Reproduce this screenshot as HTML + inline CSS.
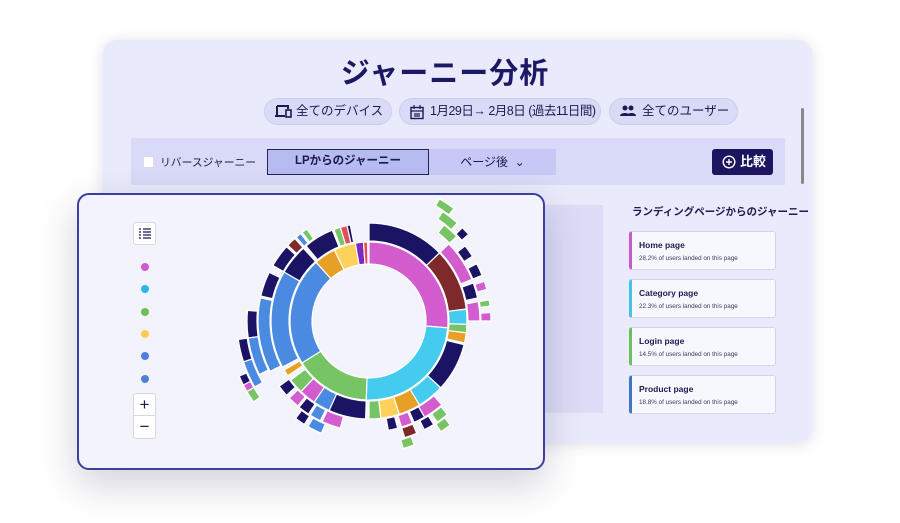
<!DOCTYPE html>
<html><head><meta charset="utf-8"><style>
*{box-sizing:border-box;margin:0;padding:0}
body{width:900px;height:523px;background:#fff;position:relative;overflow:hidden;font-family:"Liberation Sans","Noto Sans CJK JP",sans-serif;color:#1b1850}
.main{position:absolute;left:103px;top:40px;width:709px;height:402px;background:#e9eafb;border-radius:14px;box-shadow:0 2px 14px rgba(60,60,120,.18)}
.title{position:absolute;left:0;width:890px;top:50px;text-align:center;font-size:29px;font-weight:bold;color:#1c1863;letter-spacing:1px}
.pill{position:absolute;top:98px;height:27px;border-radius:14px;background:#d8daf6;border:1px solid #cbcdf0;font-size:12.5px;line-height:25px;color:#1d1a4f;padding-left:32px;white-space:nowrap;overflow:hidden}
.pill svg{position:absolute;left:10px;top:6px}
.bar{position:absolute;left:131px;top:138px;width:654px;height:47px;background:#d8daf7}
.cb{position:absolute;left:143px;top:156px;width:11px;height:12px;background:#fff;border:1px solid #ddd}
.rev{position:absolute;left:160px;top:154px;font-size:10.8px;color:#1d1a4f;white-space:nowrap}
.tab1{position:absolute;left:267px;top:149px;width:162px;height:26px;background:#b7bcf0;border:1.5px solid #23205a;font-size:11.5px;font-weight:bold;text-align:center;line-height:23px}
.tab2{position:absolute;left:429px;top:149px;width:127px;height:26px;background:#c6c9f3;font-size:12px;text-align:center;line-height:26px}
.cmp{position:absolute;left:712px;top:149px;width:61px;height:26px;background:#1c1560;border-radius:3px;color:#fff;font-size:13px;font-weight:bold;line-height:26px;padding-left:28px}
.scroll{position:absolute;left:801px;top:108px;width:3px;height:76px;background:#888;border-radius:2px}
.gpanel{position:absolute;left:545px;top:205px;width:58px;height:208px;background:#dcdcf6}
.rt{position:absolute;left:632px;top:204px;font-size:10.5px;font-weight:bold;color:#1d1a4f;white-space:nowrap}
.card{position:absolute;left:629px;width:147px;height:39px;background:#f7f7fe;border:1px solid #d3d3ec;border-radius:3px;border-left:3px solid}
.card b{position:absolute;left:7px;top:8px;font-size:8.5px;color:#1d1a4f}
.card span{position:absolute;left:7px;top:23px;font-size:6.3px;color:#3b3860;white-space:nowrap}
.float{position:absolute;left:77px;top:193px;width:468px;height:277px;background:#f3f3fc;border:2px solid #3c3ea0;border-radius:12px;box-shadow:0 14px 40px rgba(40,40,80,.22)}
.btn{position:absolute;left:133px;width:23px;background:#fff;border:1px solid #d6d6e8;border-radius:3px}
.dot{position:absolute;left:141px;width:8px;height:8px;border-radius:50%}
</style></head><body>
<div class="main"></div>
<div class="title">ジャーニー分析</div>
<div class="pill" style="left:264px;width:128px;padding-left:31px"><svg width="18" height="14" viewBox="0 0 18 14"><path d="M2 1h11v3M2 1v9M0 11h10" stroke="#1d1a4f" stroke-width="2" fill="none"/><rect x="11" y="5" width="5" height="7" fill="none" stroke="#1d1a4f" stroke-width="1.6"/></svg>全てのデバイス</div>
<div class="pill" style="left:399px;width:202px;padding-left:30px;letter-spacing:-0.5px"><svg width="14" height="15" viewBox="0 0 14 15"><rect x="1" y="2.5" width="12" height="11" fill="none" stroke="#1d1a4f" stroke-width="1.4"/><path d="M1 6h12M4 0v4M10 0v4M4 9h6M4 11h6" stroke="#1d1a4f" stroke-width="1.2"/></svg>1月29日→ 2月8日 (過去11日間)</div>
<div class="pill" style="left:609px;width:129px"><svg width="16" height="12" viewBox="0 0 16 12"><circle cx="5" cy="3" r="2.5" fill="#1d1a4f"/><circle cx="11" cy="3" r="2.5" fill="#1d1a4f"/><path d="M0 11c0-4 10-4 10 0zM7 11c0-4 9-4 9 0z" fill="#1d1a4f"/></svg>全てのユーザー</div>
<div class="bar"></div><div class="cb"></div><div class="rev">リバースジャーニー</div>
<div class="tab1">LPからのジャーニー</div>
<div class="tab2">ページ後 &nbsp;⌄</div>
<div class="cmp"><svg style="position:absolute;left:10px;top:6px" width="14" height="14" viewBox="0 0 14 14"><circle cx="7" cy="7" r="5.8" fill="none" stroke="#fff" stroke-width="1.4"/><path d="M4 7h6M7 4v6" stroke="#fff" stroke-width="1.4"/></svg>比較</div>
<div class="scroll"></div>
<div class="gpanel"></div>
<div class="rt">ランディングページからのジャーニー</div>
<div class="card" style="top:231px;border-left-color:#c55cc8"><b>Home page</b><span>28.2% of users landed on this page</span></div>
<div class="card" style="top:279px;border-left-color:#45c3e6"><b>Category page</b><span>22.3% of users landed on this page</span></div>
<div class="card" style="top:327px;border-left-color:#6dbf5e"><b>Login page</b><span>14.5% of users landed on this page</span></div>
<div class="card" style="top:375px;border-left-color:#3f76c8"><b>Product page</b><span>18.8% of users landed on this page</span></div>
<div class="float"></div>
<div class="btn" style="top:222px;height:23px"><svg style="position:absolute;left:5px;top:5px" width="12" height="11" viewBox="0 0 12 11"><path d="M0 1h2M4 1h8M0 4h2M4 4h8M0 7h2M4 7h8M0 10h2M4 10h8" stroke="#1d1a4f" stroke-width="1.3"/></svg></div>
<div class="dot" style="top:263px;background:#cf5bce"></div>
<div class="dot" style="top:285px;background:#2fb3ee"></div>
<div class="dot" style="top:308px;background:#6fbd5f"></div>
<div class="dot" style="top:330px;background:#fccb55"></div>
<div class="dot" style="top:352px;background:#4f80d8"></div>
<div class="dot" style="top:375px;background:#4f80d8"></div>
<div class="btn" style="top:393px;height:46px"><div style="position:absolute;top:0;left:0;width:21px;height:22px;border-bottom:1px solid #d6d6e8;text-align:center;font-size:17px;line-height:21px">+</div><div style="position:absolute;top:22px;left:0;width:21px;text-align:center;font-size:17px;line-height:22px">−</div></div>
<svg id="sb" style="position:absolute;left:0;top:0" width="900" height="523"></svg>
<script>
var cx=369,cy=321;
var R=[[57,79],[80,98],[99,111],[112,122],[123,132],[133,141]];
var C={p:"#d35ccf",c:"#45cbee",g:"#77c464",b:"#4a8ae0",o:"#e89f25",y:"#fdd15a",n:"#1b1464",m:"#7f2a2a",u:"#7b2bbf",r:"#e44d5a"};
var S=[
[0,0,95,'p'],[0,95,182,'c'],[0,182,238,'g'],[0,238,318,'b'],[0,318,334,'o'],[0,334,350,'y'],[0,350,356,'u'],[0,356,359,'r'],
[1,0,46,'n'],[1,46,83,'m'],[1,83,92,'c'],[1,92,97,'g'],[1,97,103,'o'],[1,104,133,'n'],[1,133,149,'c'],[1,149,162,'o'],[1,162,173,'y'],[1,173,180,'g'],[1,182,204,'n'],[1,204,214,'b'],[1,214,224,'p'],[1,224,233,'g'],[1,236,240,'o'],[1,242,300,'b'],[1,300,318,'n'],[1,320,338,'n'],[1,339,343,'g'],[1,343,347,'r'],[1,347,349,'n'],
[2,46,68,'p'],[2,70,78,'n'],[2,80,90,'p'],[2,139,150,'p'],[2,150,156,'n'],[2,157,163,'p'],[2,165,170,'n'],[2,195,205,'p'],[2,206,212,'b'],[2,213,219,'n'],[2,220,226,'p'],[2,228,234,'n'],[2,243,282,'b'],[2,283,296,'n'],[2,300,312,'n'],[2,313,318,'m'],[2,319,322,'b'],[2,323,326,'g'],
[3,38,46,'g'],[3,52,58,'n'],[3,62,68,'n'],[3,71,75,'p'],[3,80,83,'g'],[3,86,90,'p'],[3,140,146,'g'],[3,148,153,'n'],[3,157,163,'m'],[3,203,210,'b'],[3,212,217,'n'],[3,244,262,'b'],[3,262,275,'n'],
[4,34,42,'g'],[4,45,49,'n'],[4,142,147,'g'],[4,160,165,'g'],[4,240,252,'b'],[4,252,262,'n'],
[5,30,37,'g'],[5,235,242,'g'],[5,243,247,'n'],[5,240,243,'p']];
function pt(r,a){a=(a-90)*Math.PI/180;return[(cx+r*Math.cos(a)).toFixed(1),(cy+r*Math.sin(a)).toFixed(1)]}
var h='';
S.forEach(function(s){var r0=R[s[0]][0],r1=R[s[0]][1],a0=s[1],a1=s[2],l=(a1-a0)>180?1:0;
var A=pt(r1,a0),B=pt(r1,a1),Cc=pt(r0,a1),D=pt(r0,a0);
h+='<path d="M'+A+'A'+r1+' '+r1+' 0 '+l+' 1 '+B+'L'+Cc+'A'+r0+' '+r0+' 0 '+l+' 0 '+D+'Z" fill="'+C[s[3]]+'" stroke="#fff" stroke-width="1.2"/>';});
document.getElementById('sb').innerHTML=h;
</script>
</body></html>
